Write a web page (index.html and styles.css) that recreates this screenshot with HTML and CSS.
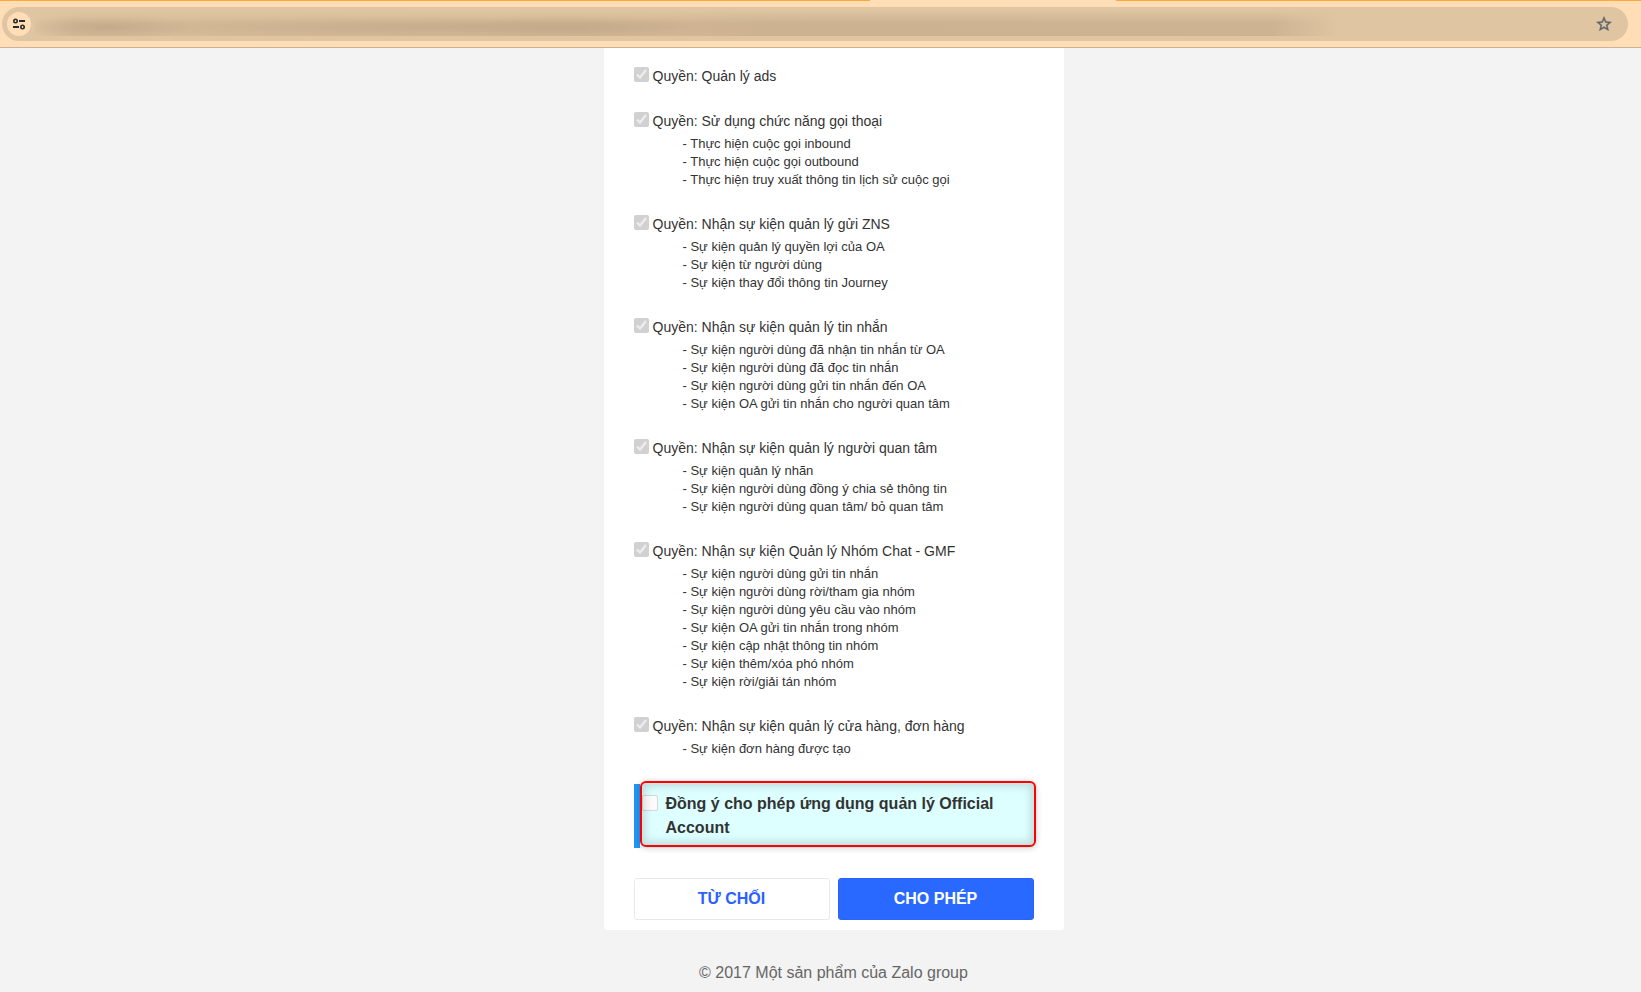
FILE: index.html
```html
<!DOCTYPE html>
<html lang="vi">
<head>
<meta charset="utf-8">
<meta name="viewport" content="width=device-width, initial-scale=1">
<title>Zalo Official Account</title>
<link rel="stylesheet" href="styles.css">
</head>
<body>
<header class="toolbar">
  <div class="tab-edge"><span class="tab-edge-left"></span><span class="tab-edge-right"></span></div>
  <div class="omnibox">
    <button class="site-info" type="button" aria-label="Site information">
      <svg width="16" height="16" viewBox="0 0 16 16" fill="none" stroke="#2b2b2b" stroke-width="2">
        <circle cx="4.5" cy="5" r="1.7" stroke-width="1.6"/><path d="M8 5h6M2 11h6"/><circle cx="11.5" cy="11" r="1.7" stroke-width="1.6"/>
      </svg>
    </button>
    <input class="address" type="text" aria-label="Address" readonly>
    <button class="bookmark" type="button" aria-label="Bookmark">
      <svg width="18" height="18" viewBox="0 0 24 24" fill="#5f6368"><path d="M22 9.24l-7.19-.62L12 2 9.19 8.63 2 9.24l5.46 4.73L5.82 21 12 17.27 18.18 21l-1.63-7.03L22 9.24zM12 15.4l-3.76 2.27 1-4.28-3.32-2.88 4.38-.38L12 6.1l1.71 4.04 4.38.38-3.32 2.88 1 4.28L12 15.4z" stroke="#5f6368" stroke-width=".5"/></svg>
    </button>
  </div>
</header>
<div class="page">
<main class="card">
  <section class="group">
    <label class="title"><input class="check" type="checkbox" checked disabled>Quyền: Quản lý ads</label>
  </section>
  <section class="group">
    <label class="title"><input class="check" type="checkbox" checked disabled>Quyền: Sử dụng chức năng gọi thoại</label>
    <ul class="items">
      <li>- Thực hiện cuộc gọi inbound</li>
      <li>- Thực hiện cuộc gọi outbound</li>
      <li>- Thực hiện truy xuất thông tin lịch sử cuộc gọi</li>
    </ul>
  </section>
  <section class="group">
    <label class="title"><input class="check" type="checkbox" checked disabled>Quyền: Nhận sự kiện quản lý gửi ZNS</label>
    <ul class="items">
      <li>- Sự kiện quản lý quyền lợi của OA</li>
      <li>- Sự kiện từ người dùng</li>
      <li>- Sự kiện thay đổi thông tin Journey</li>
    </ul>
  </section>
  <section class="group">
    <label class="title"><input class="check" type="checkbox" checked disabled>Quyền: Nhận sự kiện quản lý tin nhắn</label>
    <ul class="items">
      <li>- Sự kiện người dùng đã nhận tin nhắn từ OA</li>
      <li>- Sự kiện người dùng đã đọc tin nhắn</li>
      <li>- Sự kiện người dùng gửi tin nhắn đến OA</li>
      <li>- Sự kiện OA gửi tin nhắn cho người quan tâm</li>
    </ul>
  </section>
  <section class="group">
    <label class="title"><input class="check" type="checkbox" checked disabled>Quyền: Nhận sự kiện quản lý người quan tâm</label>
    <ul class="items">
      <li>- Sự kiện quản lý nhãn</li>
      <li>- Sự kiện người dùng đồng ý chia sẻ thông tin</li>
      <li>- Sự kiện người dùng quan tâm/ bỏ quan tâm</li>
    </ul>
  </section>
  <section class="group">
    <label class="title"><input class="check" type="checkbox" checked disabled>Quyền: Nhận sự kiện Quản lý Nhóm Chat - GMF</label>
    <ul class="items">
      <li>- Sự kiện người dùng gửi tin nhắn</li>
      <li>- Sự kiện người dùng rời/tham gia nhóm</li>
      <li>- Sự kiện người dùng yêu cầu vào nhóm</li>
      <li>- Sự kiện OA gửi tin nhắn trong nhóm</li>
      <li>- Sự kiện cập nhật thông tin nhóm</li>
      <li>- Sự kiện thêm/xóa phó nhóm</li>
      <li>- Sự kiện rời/giải tán nhóm</li>
    </ul>
  </section>
  <section class="group">
    <label class="title"><input class="check" type="checkbox" checked disabled>Quyền: Nhận sự kiện quản lý cửa hàng, đơn hàng</label>
    <ul class="items">
      <li>- Sự kiện đơn hàng được tạo</li>
    </ul>
  </section>
  <div class="consent">
    <label class="consent-label"><input class="consent-check" type="checkbox">Đồng ý cho phép ứng dụng quản lý Official Account</label>
    <span class="highlight"></span>
  </div>
  <div class="actions">
    <button class="btn" type="button">TỪ CHỐI</button>
    <button class="btn btn-primary" type="button">CHO PHÉP</button>
  </div>
</main>
<footer class="footer">© 2017 Một sản phẩm của Zalo group</footer>
</div>
</body>
</html>
```
FILE: styles.css
```css
* { box-sizing: border-box; }
body {
  margin: 0;
  background: #f3f3f3;
  color: #333;
  font-family: "Liberation Sans", Arial, sans-serif;
}
.toolbar {
  background: #ffdeb7;
  border-bottom: 1px solid #ccb292;
  padding-bottom: 6px;
}
.tab-edge {
  display: flex;
  justify-content: space-between;
  height: 1px;
  margin-bottom: 6px;
}
.tab-edge-left { width: 53%; background: #ffa83c; }
.tab-edge-right { width: 32%; background: #ffa83c; }
.omnibox {
  display: flex;
  align-items: center;
  height: 34px;
  margin: 0 13px 0 2px;
  padding: 0 15px 0 5px;
  border-radius: 17px;
  background: #dfc5a2;
}
.site-info, .bookmark {
  display: grid;
  place-items: center;
  flex: none;
  padding: 0;
  border: 0;
  background: none;
}
.site-info { width: 24px; height: 24px; border-radius: 50%; background: #ffdeb7; }
.address {
  flex: 1;
  min-width: 0;
  height: 26px;
  margin: 0 230px 2px 4px;
  padding: 0;
  border: 0;
  outline: 0;
  background:
    linear-gradient(#dfc5a2, #dfc5a200 50%),
    radial-gradient(ellipse 90px 13px at 70px 17px, #b39a7a80, #b39a7a00),
    radial-gradient(ellipse 340px 12px at 400px 17px, #b8a07f80, #b8a07f00),
    radial-gradient(ellipse 120px 14px at 540px 17px, #b8a07f66, #b8a07f00),
    linear-gradient(90deg, #dfc5a2, #d7bc9a 3%, #d4b896 45%, #cdb292 55%, #ceb393 93%, #dfc5a2 98%);
}
.page { padding-left: 26px; }
.card {
  max-width: 460px;
  margin: 0 auto;
  padding: 18px 30px 10px;
  border-radius: 0 0 3px 3px;
  background: #fff;
}
.group { margin-bottom: 25px; }
.title {
  display: flex;
  align-items: center;
  gap: 4px;
  font-size: 14px;
  line-height: 20px;
}
.check { width: 15px; height: 15px; margin: 0 0 4px; }
.items {
  margin: 4px 0 0;
  padding: 0 0 0 49px;
  list-style: none;
  font-size: 13px;
  line-height: 18px;
}
.consent {
  position: relative;
  margin-top: 26px;
  border-left: 6px solid #2196f3;
  background: #ddffff;
  padding: 8px 2px;
}
.consent-label {
  display: flex;
  align-items: flex-start;
  gap: 8px;
  font-size: 16px;
  font-weight: 700;
  line-height: 24px;
}
.consent-check {
  appearance: none;
  flex: none;
  width: 16px;
  height: 16px;
  margin: 3px 0 0;
  border: 1px solid #d4d8da;
  border-radius: 2px;
  background: #fbfbfb;
}
.consent-check:checked { background: #2962ff; }
.highlight {
  position: absolute;
  inset: -3px -2px 1px 0;
  border: 2px solid #f00;
  border-radius: 6px;
  box-shadow: inset 0 0 8px 3px #00000026, 0 1px 6px #00000033;
  pointer-events: none;
}
.actions {
  display: grid;
  grid-template-columns: 1fr 1fr;
  gap: 8px;
  margin-top: 30px;
}
.btn {
  height: 42px;
  padding: 0;
  border: 1px solid #e8e8e8;
  border-radius: 3px;
  background: #fff;
  color: #2962ff;
  font: 700 16px/24px "Liberation Sans", Arial, sans-serif;
}
.btn-primary { border-color: #2962ff; background: #2a69ff; color: #fff; }
.footer {
  padding: 31px 0 6px;
  color: #666;
  font-size: 16px;
  line-height: 24px;
  text-align: center;
}
```
